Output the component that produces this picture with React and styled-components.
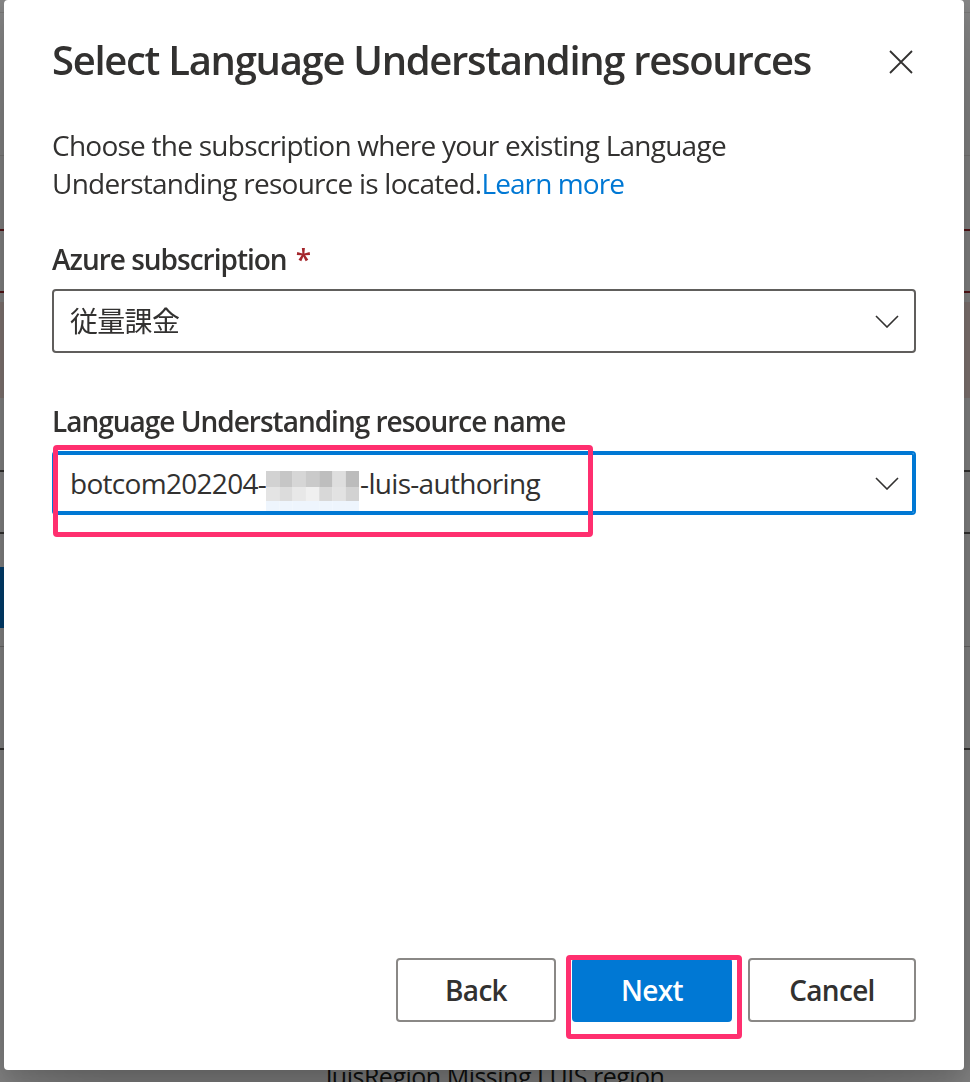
import React from 'react';
import styled, { createGlobalStyle } from 'styled-components';

const GlobalStyle = createGlobalStyle`
  html, body { margin: 0; padding: 0; }
  body {
    font-family: "Open Sans", "Noto Sans CJK JP", sans-serif;
    background: #ffffff;
    overflow: hidden;
  }
  * { box-sizing: border-box; }
`;

/* ---------- background page (seen through the modal overlay) ---------- */
const Page = styled.div`
  width: 970px;
  height: 1082px;
  overflow: hidden;
  background: #ffffff;
  display: flex;
  flex-direction: column;
  color: #201f1e;
`;

const BgRow = styled.div`
  flex: none;
  height: ${(p) => p.$h}px;
  width: ${(p) => (p.$w ? `${p.$w}px` : '100%')};
  background: ${(p) => p.$bg || 'transparent'};
  border-top: ${(p) => p.$top || 'none'};
  border-bottom: ${(p) => p.$bottom || 'none'};
`;

const BgText = styled.div`
  flex: none;
  padding-left: 314px;
  font-size: 25px;
  line-height: 36px;
  letter-spacing: -0.5px;
  white-space: nowrap;
  color: #201f1e;
`;

/* ---------- modal ---------- */
const Overlay = styled.div`
  position: fixed;
  inset: 0;
  background: rgba(0, 0, 0, 0.47);
  display: flex;
  justify-content: center;
  align-items: flex-start;
  padding-right: 2px;
`;

const Dialog = styled.div`
  width: 960px;
  height: 1070px;
  background: #ffffff;
  border-radius: 4px;
  box-shadow: 0 51px 115px rgba(0, 0, 0, 0.22), 0 10px 29px rgba(0, 0, 0, 0.18);
  display: flex;
  flex-direction: column;
  padding: 0 48px 48px 48px;
  color: #323130;
`;

const Header = styled.div`
  display: flex;
  align-items: flex-start;
  justify-content: space-between;
  margin-top: 32px;
`;

const Title = styled.h1`
  margin: 0;
  font-size: 40px;
  font-weight: 600;
  line-height: 56px;
  letter-spacing: -1.3px;
  color: #323130;
`;

const CloseButton = styled.button`
  width: 32px;
  height: 32px;
  margin-top: 14px;
  margin-right: -1px;
  padding: 0;
  border: none;
  background: transparent;
  display: flex;
  align-items: center;
  justify-content: center;
  cursor: pointer;
`;

const SubText = styled.p`
  margin: 38px 0 0;
  font-size: 28px;
  line-height: 38px;
  letter-spacing: -0.75px;
  color: #323130;
`;

const Link = styled.a`
  color: #0078d4;
  text-decoration: none;
  letter-spacing: -0.9px;
`;

const Field = styled.div`
  margin-top: ${(p) => p.$mt}px;
  display: flex;
  flex-direction: column;
`;

const Label = styled.label`
  display: block;
  padding: 10px 0;
  font-size: 28px;
  font-weight: 600;
  line-height: 40px;
  letter-spacing: -1px;
  color: #323130;
`;

const Required = styled.span`
  color: #a4262c;
  margin-left: 9px;
`;

const DropWrap = styled.div`
  position: relative;
`;

const Dropdown = styled.div`
  height: 64px;
  border: 2px solid ${(p) => (p.$focused ? '#0078d4' : '#605e5c')};
  box-shadow: ${(p) => (p.$focused ? 'inset 0 0 0 2px #0078d4' : 'none')};
  border-radius: 4px;
  display: flex;
  align-items: center;
  padding: 0 15px 0 16px;
  background: #ffffff;
`;

const Value = styled.span`
  flex: 1;
  display: inline-flex;
  align-items: center;
  font-size: 28px;
  line-height: 60px;
  letter-spacing: -0.7px;
  color: #323130;
  white-space: nowrap;
  font-family: "Open Sans", "Noto Sans CJK JP", sans-serif;
`;

const Mosaic = styled.svg`
  flex: none;
  margin-top: 16px;
  margin-right: 1px;
`;

const Highlight = styled.div`
  position: absolute;
  top: ${(p) => p.$top}px;
  left: ${(p) => p.$left}px;
  width: ${(p) => p.$w}px;
  height: ${(p) => p.$h}px;
  border: 5px solid #ff2f6f;
  border-radius: 4px;
  pointer-events: none;
`;

const Footer = styled.div`
  margin-top: auto;
  display: flex;
  justify-content: flex-end;
  gap: 16px;
`;

const BtnWrap = styled.div`
  position: relative;
  display: flex;
`;

const Button = styled.button`
  width: ${(p) => p.$w}px;
  height: 64px;
  border-radius: 4px;
  border: 2px solid ${(p) => (p.$primary ? '#0078d4' : '#8a8886')};
  background: ${(p) => (p.$primary ? '#0078d4' : '#ffffff')};
  color: ${(p) => (p.$primary ? '#ffffff' : '#323130')};
  font-family: "Open Sans", sans-serif;
  font-size: 28px;
  font-weight: 600;
  letter-spacing: -0.7px;
  padding: 0;
  cursor: pointer;
`;

const Chevron = () => (
  <svg width="24" height="13" viewBox="0 0 24 13" style={{ flex: 'none' }}>
    <polyline points="1,1 12,12 23,1" fill="none" stroke="#323130" strokeWidth="1.6" />
  </svg>
);

const mosaicRows = [
  ['#d2d2d2', '#c6c6c6', '#d6d6d6', '#cacaca', '#bebebe', '#dedede', '#bcbcbc'],
  ['#e4e4e4', '#dcdcdc', '#e8e8e8', '#f0f0f0', '#d8d8d8', '#e2e2e2', '#d2d2d2'],
  ['#eef5fd', '#eef5fd', '#eef5fd', '#eef5fd', '#eef5fd', '#eef5fd', '#eef5fd'],
];
const rowHeights = [16, 14, 10];

const BlurMosaic = () => {
  let y = 0;
  return (
    <Mosaic width="93" height="40" viewBox="0 0 93 40">
      {mosaicRows.map((row, r) => {
        const top = y;
        y += rowHeights[r];
        return row.map((c, i) => (
          <rect key={`${r}-${i}`} x={i * 13.3} y={top} width="13.4" height={rowHeights[r]} fill={c} />
        ));
      })}
    </Mosaic>
  );
};

export default function App() {
  return (
    <>
      <GlobalStyle />
      <Page>
        <BgRow $h={13} $bottom="1px solid #e8e6e4" />
        <BgRow $h={143} $bottom="1px solid #e8e6e4" />
        <BgRow $h={73} />
        <BgRow $h={64} $top="2px solid #a4262c" $bottom="2px solid #a4262c" />
        <BgRow $h={9} />
        <BgRow $h={96} $bg="#fbe3de" />
        <BgRow $h={72} />
        <BgRow $h={64} $top="2px solid #605e5c" $bottom="2px solid #605e5c" />
        <BgRow $h={33} />
        <BgRow $h={61} $w={200} $bg="#0078d4" />
        <BgRow $h={19} $bottom="1px solid #c8c6c4" />
        <BgRow $h={103} $bottom="2px solid #605e5c" />
        <BgRow $h={308} />
        <BgText>. luisRegion Missing LUIS region</BgText>
      </Page>

      <Overlay>
        <Dialog role="dialog" aria-modal="true">
          <Header>
            <Title>Select Language Understanding resources</Title>
            <CloseButton aria-label="Close">
              <svg width="24" height="24" viewBox="0 0 24 24">
                <path d="M1 1 L23 23 M23 1 L1 23" stroke="#323130" strokeWidth="1.8" fill="none" />
              </svg>
            </CloseButton>
          </Header>

          <SubText>
            Choose the subscription where your existing Language
            <br />
            Understanding resource is located.<Link href="#">Learn more</Link>
          </SubText>

          <Field $mt={27}>
            <Label>
              Azure subscription<Required>*</Required>
            </Label>
            <DropWrap>
              <Dropdown>
                <Value>従量課金</Value>
                <Chevron />
              </Dropdown>
            </DropWrap>
          </Field>

          <Field $mt={38}>
            <Label>Language Understanding resource name</Label>
            <DropWrap>
              <Dropdown $focused>
                <Value>
                  botcom202204-
                  <BlurMosaic />
                  -luis-authoring
                </Value>
                <Chevron />
              </Dropdown>
              <Highlight $top={-6} $left={1} $w={540} $h={92} />
            </DropWrap>
          </Field>

          <Footer>
            <BtnWrap>
              <Button $w={160}>Back</Button>
            </BtnWrap>
            <BtnWrap>
              <Button $w={160} $primary>Next</Button>
              <Highlight $top={-3} $left={-6} $w={176} $h={84} />
            </BtnWrap>
            <BtnWrap>
              <Button $w={168}>Cancel</Button>
            </BtnWrap>
          </Footer>
        </Dialog>
      </Overlay>
    </>
  );
}
